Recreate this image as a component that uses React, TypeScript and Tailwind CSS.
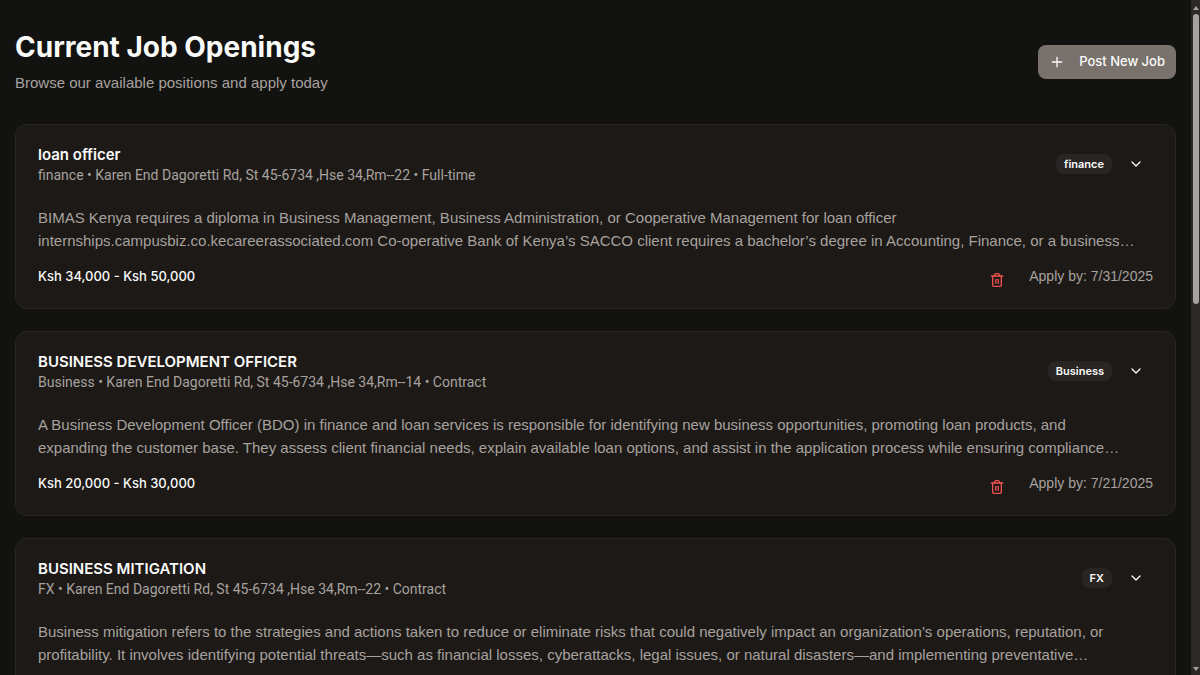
import { ChevronDown, Plus } from "lucide-react";

type Job = {
  title: string;
  department: string;
  location: string;
  type: string;
  description: string[];
  salary?: string;
  deadline?: string;
};

const jobs: Job[] = [
  {
    title: "loan officer",
    department: "finance",
    location: "Karen End Dagoretti Rd, St 45-6734 ,Hse 34,Rm--22",
    type: "Full-time",
    description: [
      "BIMAS Kenya requires a diploma in Business Management, Business Administration, or Cooperative Management for loan officer",
      "internships.campusbiz.co.kecareerassociated.com Co-operative Bank of Kenya’s SACCO client requires a bachelor’s degree in Accounting, Finance, or a business…",
    ],
    salary: "Ksh 34,000 - Ksh 50,000",
    deadline: "7/31/2025",
  },
  {
    title: "BUSINESS DEVELOPMENT OFFICER",
    department: "Business",
    location: "Karen End Dagoretti Rd, St 45-6734 ,Hse 34,Rm--14",
    type: "Contract",
    description: [
      "A Business Development Officer (BDO) in finance and loan services is responsible for identifying new business opportunities, promoting loan products, and",
      "expanding the customer base. They assess client financial needs, explain available loan options, and assist in the application process while ensuring compliance…",
    ],
    salary: "Ksh 20,000 - Ksh 30,000",
    deadline: "7/21/2025",
  },
  {
    title: "BUSINESS MITIGATION",
    department: "FX",
    location: "Karen End Dagoretti Rd, St 45-6734 ,Hse 34,Rm--22",
    type: "Contract",
    description: [
      "Business mitigation refers to the strategies and actions taken to reduce or eliminate risks that could negatively impact an organization’s operations, reputation, or",
      "profitability. It involves identifying potential threats—such as financial losses, cyberattacks, legal issues, or natural disasters—and implementing preventative…",
    ],
  },
];

function TrashIcon() {
  return (
    <svg
      viewBox="0 0 24 24"
      className="size-4"
      fill="none"
      stroke="currentColor"
      strokeWidth="2"
      strokeLinecap="round"
      strokeLinejoin="round"
      aria-hidden="true"
    >
      <path d="M3.5 6h17" />
      <path d="M18.5 6v13.5a2 2 0 0 1-2 2h-9a2 2 0 0 1-2-2V6" />
      <path d="M8.5 6V4.5a2 2 0 0 1 2-2h3a2 2 0 0 1 2 2V6" />
      <path d="M10.2 11v6" />
      <path d="M13.8 11v6" />
    </svg>
  );
}

function JobCard({ job }: { job: Job }) {
  return (
    <article className="rounded-xl border border-[#292524] bg-[#1c1917] px-[22px] py-5">
      <header className="flex items-start justify-between">
        <div>
          <h2 className="text-[15px] leading-5 font-semibold text-[#fafaf9]">{job.title}</h2>
          <p className="font-['Roboto',sans-serif] text-sm leading-5 text-[#a8a29e]">
            {job.department} • {job.location} • {job.type}
          </p>
        </div>
        <div className="flex items-center gap-2 pt-[3px] pr-px">
          <span className="rounded-lg bg-[#292524] px-2 text-[11px] leading-5 font-semibold text-[#fafaf9]">
            {job.department}
          </span>
          <button type="button" aria-label={`Show ${job.title}`} className="flex h-8 w-8 items-center justify-center text-[#fafaf9]">
            <ChevronDown className="size-4" />
          </button>
        </div>
      </header>
      <p className="mt-[21px] font-['Liberation_Sans',sans-serif] text-[15px] leading-[23px] whitespace-nowrap text-[#a8a29e]">
        {job.description.map((line) => (
          <span key={line} className="block">
            {line}
          </span>
        ))}
      </p>
      {job.salary && (
        <footer className="mt-[13px] flex items-start justify-between">
          <p className="text-[13px] leading-[22px] font-medium text-[#fafaf9]">{job.salary}</p>
          <div className="flex items-start gap-6">
            <button type="button" aria-label={`Delete ${job.title}`} className="pt-[7px] text-[#f05252]">
              <TrashIcon />
            </button>
            <p className="font-['Liberation_Sans',sans-serif] text-sm leading-[22px] text-[#a8a29e]">
              Apply by: {job.deadline}
            </p>
          </div>
        </footer>
      )}
    </article>
  );
}

function ScrollTrack() {
  return (
    <div aria-hidden="true" className="flex w-[9px] shrink-0 flex-col items-center justify-between bg-[#2c2a29] py-1">
      <div className="flex h-[45%] flex-col items-center gap-1">
        <svg viewBox="0 0 6 4" className="mt-0.5 h-1 w-1.5 shrink-0 fill-[#a8a29e]">
          <path d="M3 0 6 4H0z" />
        </svg>
        <div className="w-1.5 grow rounded-full bg-[#a8a29e]" />
      </div>
      <svg viewBox="0 0 6 4" className="h-1 w-1.5 fill-[#a8a29e]">
        <path d="M3 4 6 0H0z" />
      </svg>
    </div>
  );
}

export default function App() {
  return (
    <div className="flex h-screen overflow-hidden bg-[#121210] font-['Inter','Liberation_Sans',sans-serif]">
      <main className="min-w-0 grow overflow-y-auto px-[15px] pt-7 [scrollbar-width:none]">
        <div className="flex items-center justify-between">
          <div>
            <h1 className="text-[28px] leading-[38px] font-bold text-[#fafaf9]">Current Job Openings</h1>
            <p className="mt-1 font-['Liberation_Sans',sans-serif] text-[15px] leading-[26px] text-[#a8a29e]">
              Browse our available positions and apply today
            </p>
          </div>
          <button
            type="button"
            className="flex h-[34px] items-center gap-3.5 rounded-lg bg-[#78716c] px-[11px] text-[13px] font-medium text-[#fafaf9]"
          >
            <Plus className="size-4" />
            Post New Job
          </button>
        </div>
        <section className="mt-7 flex flex-col gap-[22px] pb-6">
          {jobs.map((job) => (
            <JobCard key={job.title} job={job} />
          ))}
        </section>
      </main>
      <ScrollTrack />
    </div>
  );
}
